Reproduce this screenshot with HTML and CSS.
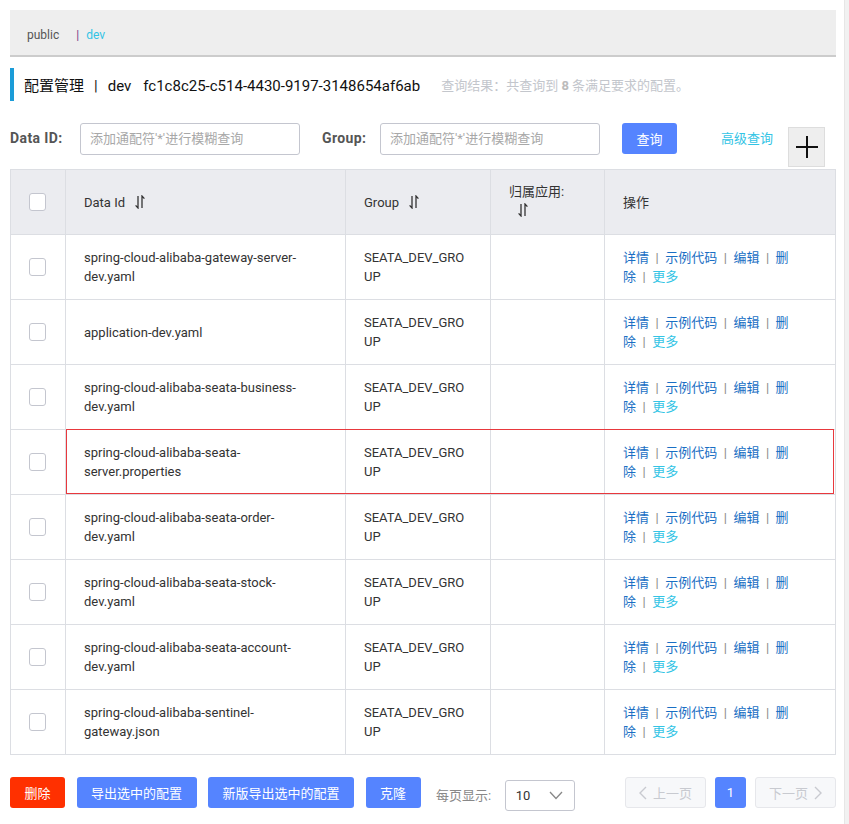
FILE: index.html
```html
<!DOCTYPE html>
<html lang="zh-CN">
<head>
<meta charset="utf-8">
<title>配置管理</title>
<link rel="stylesheet" href="styles.css">
</head>
<body>
<div class="scroll-track"></div>
<div class="page">
  <div class="ns-bar">
    <span class="ns-item">public</span>
    <span class="ns-sep">|</span>
    <span class="ns-item ns-active">dev</span>
  </div>

  <div class="title-row">
    <div class="title-main">配置管理<span class="title-sep">|</span>dev<span class="title-id">fc1c8c25-c514-4430-9197-3148654af6ab</span></div>
    <div class="title-result">查询结果：共查询到 <b>8</b> 条满足要求的配置。</div>
  </div>

  <div class="search-row">
    <label class="search-label">Data ID:</label>
    <div class="search-input">添加通配符'*'进行模糊查询</div>
    <label class="search-label group-label">Group:</label>
    <div class="search-input">添加通配符'*'进行模糊查询</div>
    <button class="btn btn-primary btn-query">查询</button>
    <a class="adv-link">高级查询</a>
    <button class="plus-btn"><svg width="22" height="22" viewBox="0 0 22 22"><path d="M11 0V22M0 11H22" stroke="#111" stroke-width="2"/></svg></button>
  </div>

  <div class="table">
    <div class="row head">
      <div class="cell cb-cell"><span class="checkbox"></span></div>
      <div class="cell">Data Id<svg class="sort" width="10" height="14" viewBox="0 0 10 14"><path d="M3 1V13L0.6 10.4M7 13V1L9.4 3.6" fill="none" stroke="#333" stroke-width="1.3"/></svg></div>
      <div class="cell">Group<svg class="sort" width="10" height="14" viewBox="0 0 10 14"><path d="M3 1V13L0.6 10.4M7 13V1L9.4 3.6" fill="none" stroke="#333" stroke-width="1.3"/></svg></div>
      <div class="cell app-head">归属应用:<br><svg class="sort" width="10" height="14" viewBox="0 0 10 14"><path d="M3 1V13L0.6 10.4M7 13V1L9.4 3.6" fill="none" stroke="#333" stroke-width="1.3"/></svg></div>
      <div class="cell">操作</div>
    </div>

    <div class="row">
      <div class="cell cb-cell"><span class="checkbox"></span></div>
      <div class="cell id-cell">spring-cloud-alibaba-gateway-server-dev.yaml</div>
      <div class="cell grp-cell">SEATA_DEV_GROUP</div>
      <div class="cell"></div>
      <div class="cell ops-cell"><div class="ops"><a>详情</a><span class="bar">|</span><a>示例代码</a><span class="bar">|</span><a>编辑</a><span class="bar">|</span><a>删除</a><span class="bar">|</span><a class="more">更多</a></div></div>
    </div>

    <div class="row">
      <div class="cell cb-cell"><span class="checkbox"></span></div>
      <div class="cell id-cell">application-dev.yaml</div>
      <div class="cell grp-cell">SEATA_DEV_GROUP</div>
      <div class="cell"></div>
      <div class="cell ops-cell"><div class="ops"><a>详情</a><span class="bar">|</span><a>示例代码</a><span class="bar">|</span><a>编辑</a><span class="bar">|</span><a>删除</a><span class="bar">|</span><a class="more">更多</a></div></div>
    </div>

    <div class="row">
      <div class="cell cb-cell"><span class="checkbox"></span></div>
      <div class="cell id-cell">spring-cloud-alibaba-seata-business-dev.yaml</div>
      <div class="cell grp-cell">SEATA_DEV_GROUP</div>
      <div class="cell"></div>
      <div class="cell ops-cell"><div class="ops"><a>详情</a><span class="bar">|</span><a>示例代码</a><span class="bar">|</span><a>编辑</a><span class="bar">|</span><a>删除</a><span class="bar">|</span><a class="more">更多</a></div></div>
    </div>

    <div class="row hovered">
      <div class="cell cb-cell"><span class="checkbox"></span></div>
      <div class="cell id-cell">spring-cloud-alibaba-seata-server.properties</div>
      <div class="cell grp-cell">SEATA_DEV_GROUP</div>
      <div class="cell"></div>
      <div class="cell ops-cell"><div class="ops"><a>详情</a><span class="bar">|</span><a>示例代码</a><span class="bar">|</span><a>编辑</a><span class="bar">|</span><a>删除</a><span class="bar">|</span><a class="more">更多</a></div></div>
    </div>

    <div class="row">
      <div class="cell cb-cell"><span class="checkbox"></span></div>
      <div class="cell id-cell">spring-cloud-alibaba-seata-order-dev.yaml</div>
      <div class="cell grp-cell">SEATA_DEV_GROUP</div>
      <div class="cell"></div>
      <div class="cell ops-cell"><div class="ops"><a>详情</a><span class="bar">|</span><a>示例代码</a><span class="bar">|</span><a>编辑</a><span class="bar">|</span><a>删除</a><span class="bar">|</span><a class="more">更多</a></div></div>
    </div>

    <div class="row">
      <div class="cell cb-cell"><span class="checkbox"></span></div>
      <div class="cell id-cell">spring-cloud-alibaba-seata-stock-dev.yaml</div>
      <div class="cell grp-cell">SEATA_DEV_GROUP</div>
      <div class="cell"></div>
      <div class="cell ops-cell"><div class="ops"><a>详情</a><span class="bar">|</span><a>示例代码</a><span class="bar">|</span><a>编辑</a><span class="bar">|</span><a>删除</a><span class="bar">|</span><a class="more">更多</a></div></div>
    </div>

    <div class="row">
      <div class="cell cb-cell"><span class="checkbox"></span></div>
      <div class="cell id-cell">spring-cloud-alibaba-seata-account-dev.yaml</div>
      <div class="cell grp-cell">SEATA_DEV_GROUP</div>
      <div class="cell"></div>
      <div class="cell ops-cell"><div class="ops"><a>详情</a><span class="bar">|</span><a>示例代码</a><span class="bar">|</span><a>编辑</a><span class="bar">|</span><a>删除</a><span class="bar">|</span><a class="more">更多</a></div></div>
    </div>

    <div class="row last">
      <div class="cell cb-cell"><span class="checkbox"></span></div>
      <div class="cell id-cell">spring-cloud-alibaba-sentinel-gateway.json</div>
      <div class="cell grp-cell">SEATA_DEV_GROUP</div>
      <div class="cell"></div>
      <div class="cell ops-cell"><div class="ops"><a>详情</a><span class="bar">|</span><a>示例代码</a><span class="bar">|</span><a>编辑</a><span class="bar">|</span><a>删除</a><span class="bar">|</span><a class="more">更多</a></div></div>
    </div>
  </div>

  <div class="footer">
    <button class="btn btn-danger">删除</button>
    <button class="btn btn-primary">导出选中的配置</button>
    <button class="btn btn-primary">新版导出选中的配置</button>
    <button class="btn btn-primary">克隆</button>
    <span class="page-size-label">每页显示:</span>
    <div class="select"><span>10</span><svg width="14" height="9" viewBox="0 0 14 9"><path d="M1 1L7 7.5L13 1" fill="none" stroke="#888" stroke-width="1.3"/></svg></div>
    <div class="pager">
      <button class="pg-btn pg-disabled"><svg width="8" height="14" viewBox="0 0 8 14"><path d="M7 1L1 7L7 13" fill="none" stroke="#c8cad0" stroke-width="1.4"/></svg>上一页</button>
      <button class="pg-btn pg-current">1</button>
      <button class="pg-btn pg-disabled">下一页<svg width="8" height="14" viewBox="0 0 8 14"><path d="M1 1L7 7L1 13" fill="none" stroke="#c8cad0" stroke-width="1.4"/></svg></button>
    </div>
  </div>
</div>
</body>
</html>
```

FILE: styles.css
```css
* { box-sizing: border-box; }

html, body {
  margin: 0;
  padding: 0;
  background: #fff;
}

body {
  font-family: Roboto, "Noto Sans CJK SC", sans-serif;
  font-size: 13px;
  color: #333;
}

.scroll-track {
  position: fixed;
  top: 0;
  right: 0;
  width: 5px;
  height: 100%;
  background: #f1f1f1;
  border-left: 1px solid #e6e6e6;
}

.page {
  width: 826px;
  margin-left: 10px;
  padding-top: 10px;
}

/* namespace bar */
.ns-bar {
  height: 47px;
  background: #eeeeee;
  border-bottom: 2px solid #cccccc;
  display: flex;
  align-items: center;
  padding-left: 17px;
  padding-top: 5px;
  font-size: 12px;
  color: #555;
}
.ns-sep {
  color: #7a3e88;
  margin: 0 7px 0 17px;
}
.ns-active { color: #33c4e5; }

/* title */
.title-row {
  margin-top: 11px;
  height: 33px;
  border-left: 4px solid #1b9cd8;
  display: flex;
  align-items: center;
  padding-left: 10px;
}
.title-main {
  font-size: 15px;
  color: #111;
}
.title-sep { margin: 0 10px; }
.title-id { margin-left: 12px; }
.title-result {
  margin-left: 21px;
  font-size: 13px;
  color: #c3c6cc;
}
.title-result b { color: #bbb; }

/* search row */
.search-row {
  display: flex;
  align-items: flex-start;
  margin-top: 22px;
  height: 46px;
}
.search-label {
  font-weight: bold;
  color: #555;
  font-size: 14px;
  letter-spacing: 0.4px;
  line-height: 31px;
  width: 70px;
}
.group-label {
  width: 58px;
  margin-left: 22px;
}
.search-input {
  width: 220px;
  height: 32px;
  border: 1px solid #c4c6cf;
  border-radius: 3px;
  padding-left: 9px;
  line-height: 30px;
  color: #a8a8a8;
  font-size: 13px;
}
.btn {
  border: none;
  border-radius: 3px;
  color: #fff;
  font-family: inherit;
  font-size: 13px;
  height: 31px;
  padding: 0 14.5px;
}
.btn-primary { background: #5584ff; }
.btn-danger { background: #ff3000; }
.btn-query {
  width: 55px;
  margin-left: 22px;
  padding: 0;
}
.adv-link {
  color: #33c4e5;
  line-height: 31px;
  margin-left: 44px;
}
.plus-btn {
  margin-left: 15px;
  margin-top: 4px;
  width: 37px;
  height: 40px;
  background: #eeeeee;
  border: 1px solid #dddddd;
  display: flex;
  align-items: center;
  justify-content: center;
  padding: 0;
}

/* table */
.table {
  border: 1px solid #dcdee3;
  border-bottom: none;
}
.row {
  display: grid;
  grid-template-columns: 54px 280px 145px 114px 1fr;
  height: 65px;
  border-bottom: 1px solid #dcdee3;
  position: relative;
}
.row.head { background: #ebecf0; }
.cell {
  border-left: 1px solid #dcdee3;
  padding: 0 18px;
  display: flex;
  align-items: center;
  line-height: 19px;
}
.cell.app-head {
  display: block;
  padding-top: 12px;
}
.cb-cell {
  border-left: none;
  justify-content: flex-start;
  padding: 0 0 0 18px;
}
.checkbox {
  width: 17px;
  height: 18px;
  border: 1px solid #c4c6cf;
  border-radius: 3px;
  background: #fff;
}
.sort {
  margin-left: 10px;
  flex: none;
}
.app-head .sort {
  margin-left: 9px;
  vertical-align: -2px;
}

.id-cell { padding-right: 30px; }
.grp-cell { word-break: break-all; padding-right: 22px; }

.ops {
  width: 178px;
  word-break: break-all;
}
.ops a { color: #1a6fc4; }
.ops a.more { color: #33c4e5; }
.ops .bar {
  color: #888;
  margin: 0 6.5px;
}

.row.hovered::after {
  content: "";
  position: absolute;
  left: 55px;
  right: 1px;
  top: -1px;
  bottom: 0;
  border: 1px solid #e8383d;
  pointer-events: none;
}

/* footer */
.footer {
  display: flex;
  align-items: flex-start;
  margin-top: 22px;
  gap: 11.5px;
}
.footer .btn { height: 31px; }
.page-size-label {
  color: #888;
  line-height: 37px;
  margin-left: 4px;
}
.select {
  width: 70px;
  height: 31px;
  margin-top: 3px;
  margin-left: 2px;
  border: 1px solid #c4c6cf;
  border-radius: 3px;
  display: flex;
  align-items: center;
  justify-content: space-between;
  padding: 0 11px 0 10px;
  color: #333;
}
.pager {
  margin-left: auto;
  display: flex;
  gap: 9px;
}
.pg-btn {
  height: 31px;
  border-radius: 3px;
  font-family: inherit;
  font-size: 13px;
  display: flex;
  align-items: center;
  justify-content: center;
  gap: 6px;
}
.pg-disabled {
  width: 81px;
  background: #f7f8fa;
  border: 1px solid #e6e7eb;
  color: #c8cad0;
}
.pg-current {
  width: 31px;
  background: #5584ff;
  border: none;
  color: #fff;
}
```
